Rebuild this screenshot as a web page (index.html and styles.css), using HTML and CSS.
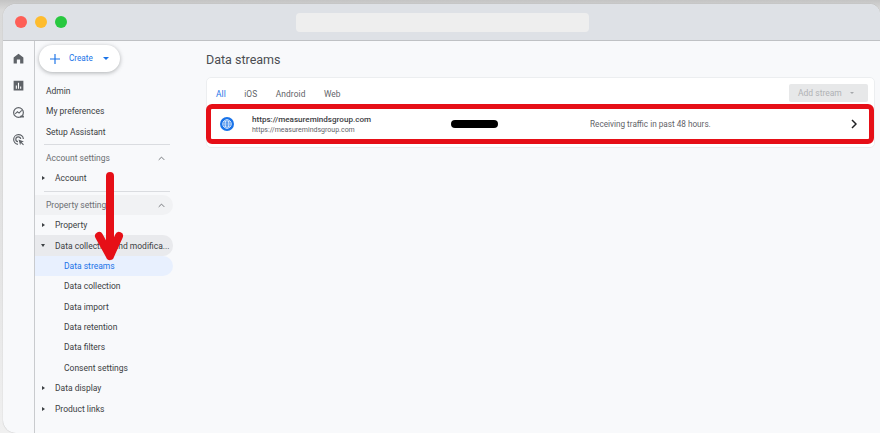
FILE: index.html
```html
<!DOCTYPE html>
<html lang="en">
<head>
<meta charset="utf-8">
<title>Data streams</title>
<link rel="stylesheet" href="styles.css">
</head>
<body>
<div class="window">
  <header class="titlebar">
    <div class="lights"><i class="light red"></i><i class="light yellow"></i><i class="light green"></i></div>
    <div class="address"></div>
  </header>
  <div class="app">
    <nav class="rail">
      <svg class="rail-icon" viewBox="0 0 24 24"><path fill="#5f6368" d="M12 3 3 10v11h6v-7h6v7h6V10z"/></svg>
      <svg class="rail-icon" viewBox="0 0 24 24"><path fill="#5f6368" d="M3 3h18v18H3z"/><path fill="#fff" d="M7 12h2v6H7zM11 7h2v11h-2zM15 14h2v4h-2z"/></svg>
      <svg class="rail-icon" viewBox="0 0 24 24"><circle cx="12" cy="12" r="9" fill="none" stroke="#5f6368" stroke-width="2.2"/><path fill="none" stroke="#5f6368" stroke-width="2" d="M6 14.500l4-4 3 2.500 5-5"/><path fill="#5f6368" d="M15 18h7v3h-7z"/></svg>
      <svg class="rail-icon" viewBox="0 0 24 24"><path fill="none" stroke="#5f6368" stroke-width="2.2" d="M21 11a9 9 0 1 0-10 10"/><path fill="none" stroke="#5f6368" stroke-width="2.2" d="M16 11a4.500 4.500 0 1 0-5 5"/><path fill="#5f6368" d="M12 12l10 3.500-4 1.500 4 4-1.500 1.500-4-4-1.500 4z"/></svg>
    </nav>
    <aside class="sidebar">
      <button class="create">
        <svg class="plus" viewBox="0 0 12 12"><path fill="#1a73e8" d="M5.300 0h1.400v5.300H12v1.400H6.700V12H5.300V6.700H0V5.300h5.300z"/></svg>
        <span class="create-label">Create</span>
        <i class="create-caret"></i>
      </button>
      <div class="link first">Admin</div>
      <div class="link">My preferences</div>
      <div class="link">Setup Assistant</div>
      <hr class="rule">
      <div class="section">Account settings<svg class="chev" viewBox="0 0 10 6"><path fill="none" stroke="#5f6368" stroke-width="1.200" d="M1 5l4-4 4 4"/></svg></div>
      <div class="item"><i class="tri"></i>Account</div>
      <hr class="rule second">
      <div class="section shaded">Property settings<svg class="chev" viewBox="0 0 10 6"><path fill="none" stroke="#5f6368" stroke-width="1.200" d="M1 5l4-4 4 4"/></svg></div>
      <div class="item"><i class="tri"></i>Property</div>
      <div class="item shaded"><i class="tri down"></i><span class="clip">Data collection and modifica...</span></div>
      <div class="sub active">Data streams</div>
      <div class="sub">Data collection</div>
      <div class="sub">Data import</div>
      <div class="sub">Data retention</div>
      <div class="sub">Data filters</div>
      <div class="sub">Consent settings</div>
      <div class="item"><i class="tri"></i>Data display</div>
      <div class="item"><i class="tri"></i>Product links</div>
    </aside>
    <main class="content">
      <h1 class="heading">Data streams</h1>
      <section class="card">
        <div class="toolbar">
          <div class="tabs">
            <span class="tab on">All</span><span class="tab">iOS</span><span class="tab">Android</span><span class="tab">Web</span>
          </div>
          <div class="add">Add stream<i class="add-caret"></i></div>
        </div>
        <div class="stream">
          <svg class="globe" viewBox="0 0 14 14">
            <circle cx="7" cy="7" r="7" fill="#1a73e8"/>
            <g fill="none" stroke="#fff" stroke-width=".7"><circle cx="7" cy="7" r="4.300"/><ellipse cx="7" cy="7" rx="1.900" ry="4.300"/><path d="M2.700 7h8.600M3.300 4.900h7.400M3.300 9.100h7.400"/></g>
          </svg>
          <div class="stream-names">
            <div class="stream-title">https://measuremindsgroup.com</div>
            <div class="stream-url">https://measuremindsgroup.com</div>
          </div>
          <div class="redact"></div>
          <div class="status">Receiving traffic in past 48 hours.</div>
          <svg class="go" viewBox="0 0 6 10"><path fill="none" stroke="#202124" stroke-width="1.500" d="M1 1l4 4-4 4"/></svg>
        </div>
      </section>
    </main>
  </div>
  <svg class="arrow" viewBox="0 0 40 95"><path fill="none" stroke="#e60f17" stroke-width="8" stroke-linecap="round" stroke-linejoin="round" d="M20 5v80M9 65l11 20 9-20"/></svg>
</div>
</body>
</html>
```

FILE: styles.css
```css
* { box-sizing: border-box; }
html, body { margin: 0; height: 100%; overflow: hidden; }
body { background: linear-gradient(to bottom, #c4c4c4, #dadada 10px, #e4e4e4 60%, #f0f0f0); font-family: Roboto, "Liberation Sans", sans-serif; color: #3c4043; padding: 4px 0 0 3px; }
.window { position: relative; width: 877px; height: 429px; background: #f8f9fb; border-radius: 13px 10px 0 13px; overflow: hidden; display: flex; flex-direction: column; box-shadow: 0 0 1px rgba(0,0,0,.3); }
.titlebar { height: 37px; flex: none; background: #dee1e6; border-bottom: 1px solid #bfc1c4; display: flex; align-items: center; position: relative; }
.lights { display: flex; gap: 8px; margin-left: 12px; }
.light { width: 12px; height: 12px; border-radius: 50%; display: block; }
.red { background: #fe5f57; }
.yellow { background: #febc2e; }
.green { background: #28c840; }
.address { position: absolute; left: 293px; top: 9px; width: 293px; height: 19px; border-radius: 4px; background: #eeeeee; }
.app { flex: 1; display: flex; min-height: 0; }
.rail { width: 32px; flex: none; border-right: 1px solid #c9cbce; display: flex; flex-direction: column; align-items: center; gap: 14px; padding: 11px 0 0 0; }
.rail-icon { width: 13px; height: 13px; display: block; }
.sidebar { width: 138px; flex: none; font-size: 8.500px; }
.create { width: 81px; height: 27px; margin: 4px 0 0 4px; border: 0; border-radius: 14px; background: #fff; box-shadow: 0 1px 4px rgba(60,64,67,.4); display: flex; align-items: center; padding: 0 0 0 11px; font: inherit; color: #1a73e8; }
.plus { width: 10px; height: 10px; }
.create-label { margin-left: 9px; font-size: 8.200px; margin-top: -1px; }
.create-caret { margin-left: 10px; border: 3px solid transparent; border-top: 3px solid #1a73e8; border-bottom: 0; }
.link { height: 20.400px; line-height: 20.400px; padding-left: 11px; color: #3c4043; }
.link.first { margin-top: 9px; }
.rule { margin: 2px 0 0 9px; width: 126px; border: 0; border-top: 1px solid #dadce0; }
.rule.second { margin-top: 2.500px; }
.section { height: 20px; line-height: 20px; margin-top: 3px; padding: 0 6px 0 11px; width: 138px; color: #6b6e72; display: flex; justify-content: space-between; align-items: center; border-radius: 0 10px 10px 0; }
.section.shaded { background: #f1f2f4; }
.chev { width: 7px; height: 5px; margin-right: 2px; }
.item { height: 20.400px; width: 138px; display: flex; align-items: center; padding-left: 7px; border-radius: 0 10px 10px 0; color: #3c4043; }
.item.shaded { background: #e9eaed; }
.clip { white-space: nowrap; overflow: hidden; }
.tri { width: 0; height: 0; margin-right: 10px; border: 2.500px solid transparent; border-left: 3px solid #3c4043; border-right: 0; }
.tri.down { margin-left: -1px; margin-right: 10px; border: 2.500px solid transparent; border-top: 3px solid #3c4043; border-bottom: 0; }
.sub { height: 20.400px; line-height: 20.400px; width: 138px; padding-left: 29px; color: #3c4043; border-radius: 0 10px 10px 0; }
.sub.active { background: #e8f0fe; color: #1a73e8; }
.content { flex: 1; min-width: 0; padding: 10px 5px 0 33px; }
.heading { margin: 0; font-size: 12.500px; font-weight: 400; line-height: 18px; color: #4a4d51; }
.card { margin-top: 8px; height: 71px; background: #fff; border: 1px solid #eceef0; border-radius: 5px; position: relative; }
.toolbar { height: 27px; display: flex; justify-content: space-between; align-items: center; padding: 0 6px 0 9px; }
.tabs { display: flex; gap: 18.400px; font-size: 8.400px; letter-spacing: .1px; color: #5f6368; margin-top: 4px; }
.tab.on { color: #1a73e8; }
.add { width: 79px; height: 18px; background: #e7e8e9; border-radius: 2px; color: #b0b2b5; font-size: 8.500px; display: flex; align-items: center; padding-left: 9px; margin-top: 2px; }
.add-caret { margin-left: 8px; border: 2.500px solid transparent; border-top: 2.500px solid #a6a8ab; border-bottom: 0; }
.stream { position: absolute; left: -1px; right: 0; top: 26px; height: 40px; border: 5px solid #e60f17; border-radius: 6px; background: #fff; display: flex; align-items: center; }
.globe { width: 14px; height: 14px; margin-left: 9px; flex: none; }
.stream-names { width: 199px; margin-left: 18px; flex: none; color: #5f6368; }
.stream-title { font-size: 8.100px; font-weight: 500; line-height: 12px; color: #3c4043; }
.stream-url { font-size: 7px; line-height: 10px; }
.redact { width: 47px; height: 8px; border-radius: 4px; background: #000; flex: none; }
.status { margin-left: 92px; font-size: 8.200px; color: #5f6368; flex: 1; }
.go { width: 6px; height: 10px; margin-right: 12px; flex: none; }
.arrow { position: absolute; left: 87px; top: 167px; width: 40px; height: 95px; }
```
